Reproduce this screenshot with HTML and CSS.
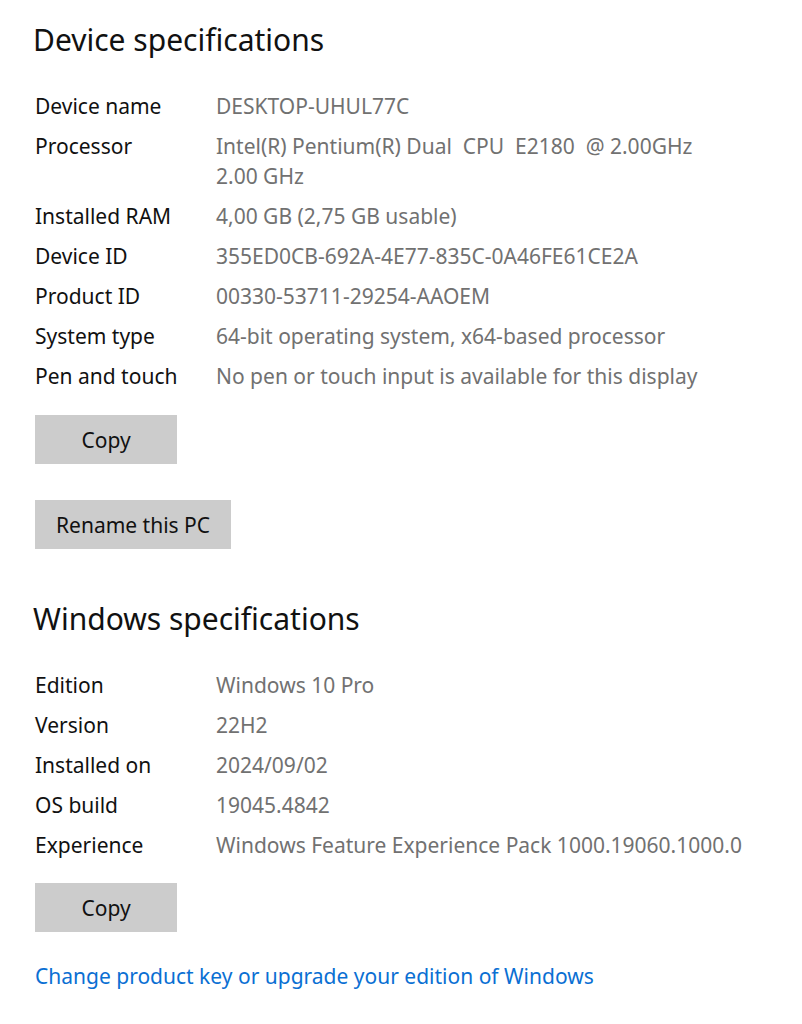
FILE: index.html
```html
<!DOCTYPE html>
<html lang="en">
<head>
<meta charset="utf-8">
<title>About</title>
<link rel="stylesheet" href="styles.css">
</head>
<body>
<main class="page">
  <section class="section">
    <h1 class="heading">Device specifications</h1>
    <dl class="specs">
      <div class="row"><dt>Device name</dt><dd>DESKTOP-UHUL77C</dd></div>
      <div class="row"><dt>Processor</dt><dd>Intel(R) Pentium(R) Dual  CPU  E2180  @ 2.00GHz<br>2.00 GHz</dd></div>
      <div class="row"><dt>Installed RAM</dt><dd>4,00 GB (2,75 GB usable)</dd></div>
      <div class="row"><dt>Device ID</dt><dd>355ED0CB-692A-4E77-835C-0A46FE61CE2A</dd></div>
      <div class="row"><dt>Product ID</dt><dd>00330-53711-29254-AAOEM</dd></div>
      <div class="row"><dt>System type</dt><dd>64-bit operating system, x64-based processor</dd></div>
      <div class="row"><dt>Pen and touch</dt><dd>No pen or touch input is available for this display</dd></div>
    </dl>
    <button class="btn btn-copy" type="button">Copy</button>
    <button class="btn btn-rename" type="button">Rename this PC</button>
  </section>
  <section class="section section-win">
    <h1 class="heading">Windows specifications</h1>
    <dl class="specs">
      <div class="row"><dt>Edition</dt><dd>Windows 10 Pro</dd></div>
      <div class="row"><dt>Version</dt><dd>22H2</dd></div>
      <div class="row"><dt>Installed on</dt><dd>2024/09/02</dd></div>
      <div class="row"><dt>OS build</dt><dd>19045.4842</dd></div>
      <div class="row"><dt>Experience</dt><dd>Windows Feature Experience Pack 1000.19060.1000.0</dd></div>
    </dl>
    <button class="btn btn-copy" type="button">Copy</button>
    <a class="link" href="#">Change product key or upgrade your edition of Windows</a>
  </section>
</main>
</body>
</html>
```
FILE: styles.css
```css
html, body {
  margin: 0;
  padding: 0;
  background: #ffffff;
}
body {
  font-family: "Noto Sans", "Open Sans", sans-serif;
  color: #000000;
}
.page {
  padding: 20px 0 0 35px;
}
.section {
  display: flex;
  flex-direction: column;
  align-items: flex-start;
}
.heading {
  margin: 0 0 0 -2px;
  font-size: 30px;
  font-weight: 400;
  line-height: 40px;
  color: #111;
}
.specs {
  margin: 31px 0 0 0;
  display: flex;
  flex-direction: column;
  gap: 10px;
}
.row {
  display: flex;
  font-size: 21px;
  line-height: 30px;
}
.row dt {
  width: 181px;
  flex: none;
  color: #111;
}
.row dd {
  margin: 0;
  color: #717171;
  white-space: pre-wrap;
}
.btn {
  font-family: inherit;
  font-size: 21px;
  color: #111;
  background: #cccccc;
  border: none;
  height: 49px;
  padding: 0 21px;
  margin: 0;
}
.btn-copy {
  width: 142px;
  margin-top: 24px;
}
.btn-rename {
  margin-top: 36px;
}
.section-win {
  margin-top: 48px;
}
.section-win .heading {
  margin-top: 2px;
}
.section-win .specs {
  margin-top: 31px;
}
.section-win .btn-copy {
  margin-top: 23px;
}
.link {
  margin-top: 30px;
  font-size: 21px;
  color: #0a6fd3;
  text-decoration: none;
}
```
